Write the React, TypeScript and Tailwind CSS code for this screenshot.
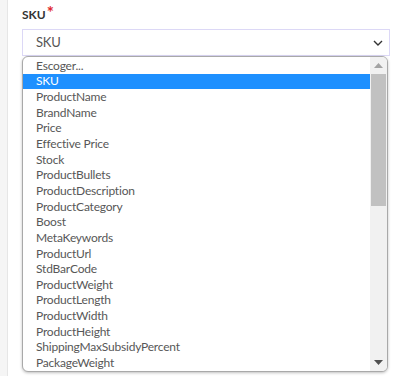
import React from "react";

const options = [
  "Escoger...",
  "SKU",
  "ProductName",
  "BrandName",
  "Price",
  "Effective Price",
  "Stock",
  "ProductBullets",
  "ProductDescription",
  "ProductCategory",
  "Boost",
  "MetaKeywords",
  "ProductUrl",
  "StdBarCode",
  "ProductWeight",
  "ProductLength",
  "ProductWidth",
  "ProductHeight",
  "ShippingMaxSubsidyPercent",
  "PackageWeight",
];

export default function App() {
  const selected = "SKU";

  return (
    <div className="flex h-[376px] w-[403px] overflow-hidden bg-white font-['Lato',sans-serif]">
      {/* side strip */}
      <div className="w-[8px] shrink-0 border-r border-[#e6e6e6] bg-[#f5f5f5]" />

      <main className="relative flex-1 pl-[14px] pr-[13px] pt-[7px]">
        {/* Campo SKU */}
        <label className="flex items-start text-[12px] font-bold leading-[16px] text-[#333]">
          SKU
          <span className="ml-[1px] -mt-[3px] text-[17px] font-bold leading-[17px] text-[#e0282e]">*</span>
        </label>

        <div className="mt-[6px] flex h-[27px] items-center justify-between border border-[#dcd8f6] bg-white pl-[13px] pr-[5px] text-[13px] tracking-[-0.2px] text-[#555]">
          <span>SKU</span>
          <svg width="12" height="12" viewBox="0 0 12 12" className="text-[#333]">
            <path d="M2 4l4 4 4-4" fill="none" stroke="currentColor" strokeWidth="1.4" />
          </svg>
        </div>

        {/* campos debajo (ocultos por la lista) */}
        <div className="mt-[18px] flex flex-col gap-[10px]">
          <div className="h-[8px] w-[3px] bg-[#444]" />
          <div className="h-[36px] border-l border-[#dcd8f6]" />
          <div className="h-[10px]" />
          <div className="h-[34px] border-l border-[#dcd8f6]" />
          <div className="h-[30px]" />
          <div className="h-[36px] border-l border-[#dcd8f6]" />
        </div>

        {/* Lista desplegada */}
        <div className="absolute left-[14px] top-[56px] flex h-[316px] w-[366px] overflow-hidden rounded-[6px] border border-[#a9a9a9] bg-white shadow-[0_1px_3px_rgba(0,0,0,0.25)]">
          <ul className="flex-1 pt-[1px] text-[12px] tracking-[-0.2px] text-[#575757]">
            {options.map((o) => (
              <li
                key={o}
                className={
                  o === selected
                    ? "flex h-[15.65px] items-center bg-[#1e90ff] pl-[13px] text-white"
                    : "flex h-[15.65px] items-center pl-[13px]"
                }
              >
                {o}
              </li>
            ))}
          </ul>

          {/* scrollbar */}
          <div className="flex w-[17px] flex-col items-center bg-[#f1f1f1]">
            <div className="flex h-[17px] items-center justify-center">
              <svg width="9" height="5" viewBox="0 0 9 5">
                <path d="M0 5L4.5 0 9 5z" fill="#a3a3a3" />
              </svg>
            </div>
            <div className="h-[132px] w-[15px] bg-[#c1c1c1]" />
            <div className="flex-1" />
            <div className="flex h-[17px] items-center justify-center">
              <svg width="9" height="5" viewBox="0 0 9 5">
                <path d="M0 0L4.5 5 9 0z" fill="#505050" />
              </svg>
            </div>
          </div>
        </div>
      </main>
    </div>
  );
}
